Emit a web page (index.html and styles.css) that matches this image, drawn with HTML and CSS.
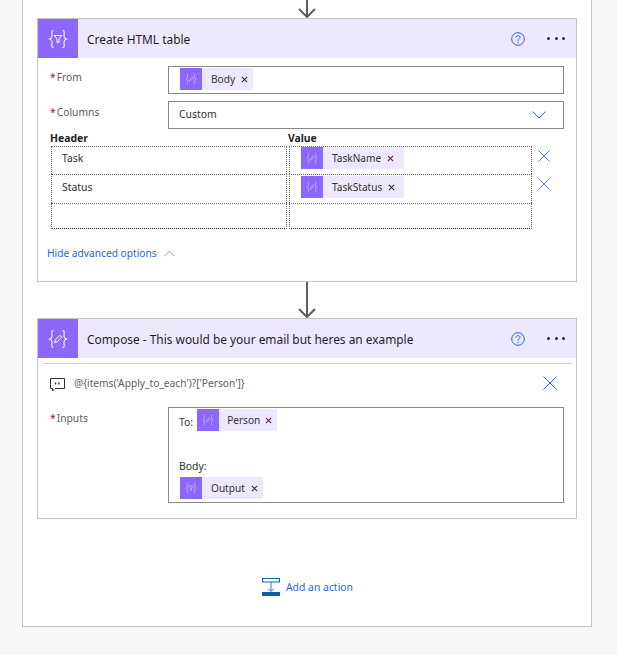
FILE: index.html
```html
<!DOCTYPE html>
<html lang="en">
<head>
<meta charset="utf-8">
<title>Flow</title>
<link rel="stylesheet" href="styles.css">
</head>
<body>
<svg class="defs" aria-hidden="true">
  <symbol id="i-braces-funnel" viewBox="0 0 20 20">
    <path d="M5.500 1.500C3 1.500 4 4 4 6.500S3.500 9.300 1.500 10C3.500 10.700 4 11 4 13.500S3 18.500 5.500 18.500M14.500 1.500C17 1.500 16 4 16 6.500S16.500 9.300 18.500 10C16.500 10.700 16 11 16 13.500S17 18.500 14.500 18.500" fill="none" stroke="currentColor" stroke-width="1.100"/>
    <path d="M6.300 6.500H13.700L11 10.200V13.500H9V10.200Z" fill="none" stroke="currentColor" stroke-width="1"/>
  </symbol>
  <symbol id="i-braces-pencil" viewBox="0 0 20 20">
    <path d="M5.500 1.500C3 1.500 4 4 4 6.500S3.500 9.300 1.500 10C3.500 10.700 4 11 4 13.500S3 18.500 5.500 18.500M14.500 1.500C17 1.500 16 4 16 6.500S16.500 9.300 18.500 10C16.500 10.700 16 11 16 13.500S17 18.500 14.500 18.500" fill="none" stroke="currentColor" stroke-width="1.100"/>
    <path d="M6.700 13.500L7.500 10.800L12 6.300L13.900 8.200L9.400 12.700Z" fill="none" stroke="currentColor" stroke-width="1"/>
  </symbol>
  <symbol id="i-x" viewBox="0 0 14 14">
    <path d="M.5.500L13.500 13.500M13.500.500L.5 13.500" fill="none" stroke="currentColor" stroke-width="1"/>
  </symbol>
  <symbol id="i-tiny-x" viewBox="0 0 8 8">
    <path d="M1 1L7 7M7 1L1 7" fill="none" stroke="currentColor" stroke-width="1.200"/>
  </symbol>
  <symbol id="i-help" viewBox="0 0 14 14">
    <circle cx="7" cy="7" r="6.300" fill="none" stroke="currentColor" stroke-width="1"/>
    <path d="M5 5.500C5 3 9 3 9 5.500C9 7 7 7 7 8.800" fill="none" stroke="currentColor" stroke-width="1"/>
    <circle cx="7" cy="10.500" r=".7" fill="currentColor"/>
  </symbol>
  <symbol id="i-arrow" viewBox="0 0 18 18">
    <path d="M9 0V17M1 9L9 17L17 9" fill="none" stroke="currentColor" stroke-width="2"/>
  </symbol>
</svg>

<main class="panel">
  <div class="connector connector-top">
    <svg class="arrow"><use href="#i-arrow"/></svg>
  </div>

  <section class="card card-table">
    <header class="card-head">
      <span class="head-icon"><svg class="head-glyph"><use href="#i-braces-funnel"/></svg></span>
      <h2 class="head-title">Create HTML table</h2>
      <svg class="help"><use href="#i-help"/></svg>
      <span class="more"><i></i><i></i><i></i></span>
    </header>
    <div class="form">
      <div class="field field-from">
        <label class="label"><b class="star">*</b>From</label>
        <div class="box box-from">
          <span class="pill">
            <span class="pill-icon"><svg class="pill-glyph"><use href="#i-braces-pencil"/></svg></span>
            <span class="pill-text">Body</span>
            <svg class="pill-x"><use href="#i-tiny-x"/></svg>
          </span>
        </div>
      </div>
      <div class="field field-columns">
        <label class="label"><b class="star">*</b>Columns</label>
        <div class="box box-select">
          <span class="select-text">Custom</span>
          <svg class="chev" viewBox="0 0 14 8"><path d="M.5.500L7 7L13.500.500" fill="none" stroke="currentColor"/></svg>
        </div>
      </div>
      <div class="kv">
        <div class="kv-head"><span>Header</span><span>Value</span></div>
        <div class="kv-row kv-row-1">
          <div class="cell cell-key">Task</div>
          <div class="cell cell-val">
            <span class="pill pill-wide">
              <span class="pill-icon"><svg class="pill-glyph"><use href="#i-braces-pencil"/></svg></span>
              <span class="pill-text">TaskName</span>
              <svg class="pill-x pill-x-red"><use href="#i-tiny-x"/></svg>
            </span>
          </div>
          <svg class="row-x"><use href="#i-x"/></svg>
        </div>
        <div class="kv-row kv-row-2">
          <div class="cell cell-key">Status</div>
          <div class="cell cell-val">
            <span class="pill pill-wide">
              <span class="pill-icon"><svg class="pill-glyph"><use href="#i-braces-pencil"/></svg></span>
              <span class="pill-text">TaskStatus</span>
              <svg class="pill-x"><use href="#i-tiny-x"/></svg>
            </span>
          </div>
          <svg class="row-x"><use href="#i-x"/></svg>
        </div>
        <div class="kv-row kv-row-3">
          <div class="cell cell-key"></div>
          <div class="cell cell-val"></div>
        </div>
      </div>
      <a class="advanced">Hide advanced options
        <svg class="chev-up" viewBox="0 0 12 7"><path d="M.5 6.500L6 1L11.500 6.500" fill="none" stroke="currentColor"/></svg>
      </a>
    </div>
  </section>

  <div class="connector connector-mid">
    <svg class="arrow-long" viewBox="0 0 18 36"><path d="M9 0V35M1 27L9 35L17 27" fill="none" stroke="currentColor" stroke-width="2"/></svg>
  </div>

  <section class="card card-compose">
    <header class="card-head">
      <span class="head-icon"><svg class="head-glyph"><use href="#i-braces-pencil"/></svg></span>
      <h2 class="head-title">Compose - This would be your email but heres an example</h2>
      <svg class="help"><use href="#i-help"/></svg>
      <span class="more"><i></i><i></i><i></i></span>
    </header>
    <div class="comment">
      <svg class="comment-icon" viewBox="0 0 15 14">
        <path d="M.5.500H14.500V10.500H5L2.500 13V10.500H.5Z" fill="none" stroke="currentColor"/>
        <path d="M5.500 4.500V6.500M9 4.500V6.500" stroke="currentColor" stroke-width="1.400"/>
      </svg>
      <span class="comment-text">@{items('Apply_to_each')?['Person']}</span>
      <svg class="comment-x"><use href="#i-x"/></svg>
    </div>
    <div class="field field-inputs">
      <label class="label"><b class="star">*</b>Inputs</label>
      <div class="box box-inputs">
        <div class="line-to">
          <span class="plain">To:</span>
          <span class="pill pill-person">
            <span class="pill-icon"><svg class="pill-glyph"><use href="#i-braces-pencil"/></svg></span>
            <span class="pill-text">Person</span>
            <svg class="pill-x pill-x-red"><use href="#i-tiny-x"/></svg>
          </span>
        </div>
        <div class="plain line-body">Body:</div>
        <span class="pill">
          <span class="pill-icon"><svg class="pill-glyph"><use href="#i-braces-funnel"/></svg></span>
          <span class="pill-text">Output</span>
          <svg class="pill-x"><use href="#i-tiny-x"/></svg>
        </span>
      </div>
    </div>
  </section>

  <a class="add">
    <svg class="add-icon" viewBox="0 0 18 18">
      <rect x=".5" y=".5" width="17" height="3.500" fill="#fff" stroke="#0f62ae"/>
      <path d="M9 4V13M6 10.500L9 13.500L12 10.500" fill="none" stroke="#2b79c2"/>
      <rect y="14" width="18" height="4" fill="#0b5cab"/>
    </svg>
    <span>Add an action</span>
  </a>
</main>
</body>
</html>
```
FILE: styles.css
```css
* { box-sizing: border-box; }
html, body { margin: 0; padding: 0; }
body {
  background: #f8f8f8;
  font-family: "Noto Sans", "Open Sans", sans-serif;
  font-size: 10.4px;
  color: #323130;
}
.defs { display: none; }

.panel {
  width: 570px;
  height: 627px;
  margin-left: 22px;
  background: #fff;
  border: 1px solid #c8c6c4;
  border-top: 0;
  padding: 0 14px;
  display: flex;
  flex-direction: column;
}

.connector { display: flex; justify-content: center; color: #605e5c; width: 540px; }
.connector-top { height: 18px; }
.arrow { width: 18px; height: 18px; display: block; }
.connector-mid { height: 36px; }
.arrow-long { width: 18px; height: 36px; display: block; }

.card {
  width: 540px;
  border: 1px solid #c8c6c4;
  background: #fff;
  flex: none;
}
.card-table { height: 264px; }
.card-compose { height: 201px; }

.card-head {
  height: 39px;
  background: #ede8fd;
  display: flex;
  align-items: center;
}
.head-icon {
  width: 40px;
  height: 39px;
  background: #8c66ff;
  color: #fff;
  display: flex;
  align-items: center;
  justify-content: center;
  flex: none;
}
.head-glyph { width: 20px; height: 20px; display: block; }
.head-title {
  margin: 1px 0 0 9px;
  flex: 1;
  font-size: 11.9px;
  font-weight: 400;
  color: #201f1e;
  white-space: nowrap;
}
.help { width: 14px; height: 14px; color: #2a66e8; margin-right: 22px; flex: none; }
.more { display: flex; gap: 4.5px; margin-right: 11px; flex: none; }
.more i { width: 3px; height: 3px; background: #323130; border-radius: 50%; display: block; }

.form { padding: 8px 12px 0; }
.field { display: grid; grid-template-columns: 118px 396px; }
.label { color: #605e5c; font-size: 10.3px; line-height: 22px; white-space: nowrap; }
.star { color: #a4262c; font-weight: 400; margin-right: 1px; }

.box { border: 1px solid #8a8886; background: #fff; }
.box-from { height: 28px; padding: 1px 11px; }
.field-columns { margin-top: 7px; }
.box-select {
  height: 28px;
  display: flex;
  align-items: center;
  justify-content: space-between;
  padding: 0 17px 2px 10px;
}
.select-text { color: #323130; }
.chev { width: 14px; height: 8px; color: #2a66e8; margin-top: 2px; }

.pill {
  display: inline-flex;
  align-items: center;
  height: 22px;
  background: #ede8fd;
  vertical-align: top;
}
.pill-wide { width: 103px; }
.pill-icon {
  width: 22px;
  height: 22px;
  background: #8c66ff;
  color: #fff;
  display: flex;
  align-items: center;
  justify-content: center;
  flex: none;
}
.pill-glyph { width: 12px; height: 12px; display: block; opacity: .65; }
.pill-text { margin-left: 9px; color: #323130; white-space: nowrap; font-size: 10.1px; }
.pill-person .pill-text { margin-left: 8px; }
.pill-person .pill-x { margin-left: 5px; }
.pill-x { width: 7px; height: 7px; margin: 1px 5px 0 6px; color: #323130; flex: none; }
.pill-x-red { color: #7a1a30; }

.kv { margin-top: 2px; }
.kv-head {
  display: grid;
  grid-template-columns: 238px 1fr;
  height: 15px;
  line-height: 15px;
  font-weight: 700;
  color: #201f1e;
}
.kv-row {
  display: grid;
  grid-template-columns: 236px 243px 14px;
  column-gap: 2px;
  margin-left: 1px;
  align-items: start;
}
.kv-row-1 { height: 28px; }
.kv-row-2 { height: 29px; }
.kv-row-3 { height: 26px; }
.kv-row-2 .cell-val { padding-top: 1px; }
.kv-row-2 .cell-key { padding-top: 5px; }
.cell {
  height: 100%;
  border: 1px dotted #6d6b69;
  border-bottom: 0;
}
.kv-row-3 .cell { border-bottom: 1px dotted #323130; }
.cell-key { padding: 4px 0 0 10px; line-height: 15px; }
.cell-val { padding-left: 11px; }
.row-x { width: 12px; height: 12px; color: #2a66e8; margin: 4px 0 0 4px; }

.advanced {
  display: flex;
  align-items: center;
  gap: 7px;
  margin: 16px 0 0 -3px;
  color: #2a66e8;
  font-size: 10.2px;
  line-height: 16px;
}
.chev-up { width: 11px; height: 7px; color: #7f97e8; }

.comment {
  margin: 5px 4px 0 5px;
  border-top: 1px solid #d2d0ce;
  height: 44px;
  display: flex;
  align-items: center;
  padding: 0 15px 5px 7px;
}
.comment-icon { width: 15px; height: 14px; color: #323130; flex: none; margin-top: 4px; }
.comment-text { margin-left: 9px; flex: 1; color: #605e5c; font-size: 10.2px; }
.comment-x { width: 14px; height: 14px; color: #2a66e8; }

.field-inputs { padding-left: 12px; }
.box-inputs { height: 96px; padding: 1px 11px 0 10px; }
.line-to { display: flex; gap: 4px; height: 46px; }
.line-to .plain { margin-top: 6px; }
.plain { color: #323130; }
.line-body { height: 22px; line-height: 22px; }
.box-inputs > .pill { margin-left: 1px; }

.add {
  display: flex;
  align-items: center;
  justify-content: center;
  gap: 6px;
  width: 540px;
  padding-left: 1px;
  margin-top: 59px;
  color: #2a66e8;
  font-size: 10.4px;
}
.add-icon { width: 18px; height: 18px; flex: none; }
```
